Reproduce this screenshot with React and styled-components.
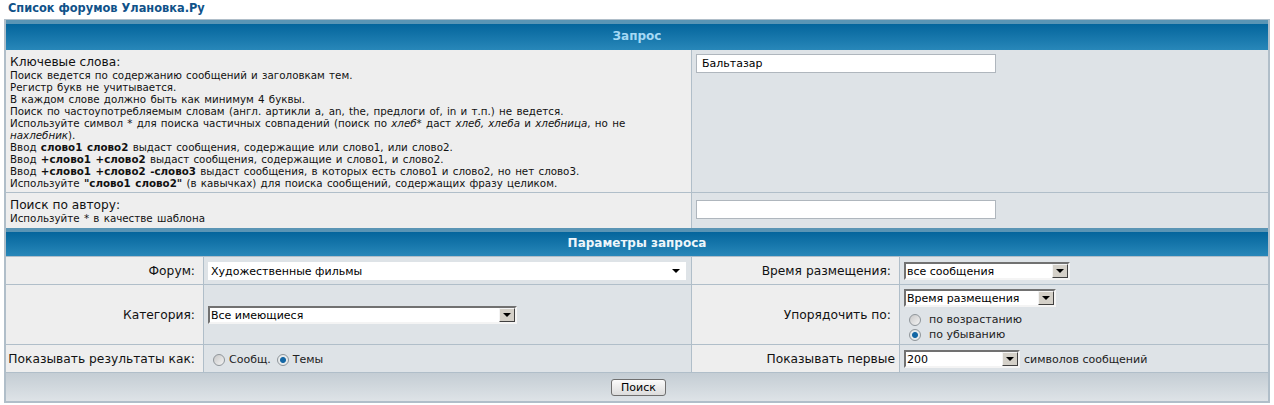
import React from "react";
import styled, { createGlobalStyle } from "styled-components";

const Global = createGlobalStyle`
  html, body { margin: 0; padding: 0; background: #fff; }
  body { font-family: Verdana, "DejaVu Sans", sans-serif; color: #000; }
`;
const Page = styled.div`
  width: 1274px;
  height: 405px;
  padding: 0 4px;
  box-sizing: border-box;
  overflow: hidden;
`;
const Title = styled.div`
  height: 19px;
  box-sizing: border-box;
  padding: 1px 0 0 4px;
  font-size: 11.4px;
  line-height: 15px;
  font-weight: bold;
  color: #105289;
`;
const Panel = styled.div`
  width: 1266px;
  height: 384px;
  box-sizing: border-box;
  border: 2px solid #b0bec9;
  border-top-width: 1px;
  background: #b0bec9;
  display: flex;
  flex-direction: column;
`;
const Head = styled.div`
  height: ${(p) => p.$h}px;
  flex: none;
  box-sizing: border-box;
  border-top: 4px solid #5a95b5;
  padding-bottom: ${(p) => p.$pb}px;
  background: linear-gradient(#04659c, #2887b9);
  color: ${(p) => p.$c};
  font-size: 12px;
  font-weight: bold;
  display: flex;
  align-items: center;
  justify-content: center;
`;
const Row = styled.div`
  display: grid;
  grid-template-columns: ${(p) => p.$cols};
  column-gap: 1px;
  height: ${(p) => p.$h}px;
  flex: none;
  margin-top: ${(p) => p.$mt ?? 1}px;
`;
const LabelCell = styled.div`
  background: #eeeeee;
  box-sizing: border-box;
  padding: ${(p) => (p.$right ? `1px ${p.$pr ?? 8}px 0 2px` : "6px 4px 0")};
  display: ${(p) => (p.$right ? "flex" : "block")};
  align-items: center;
  justify-content: flex-end;
  font-size: 12.25px;
  line-height: 12px;
  white-space: nowrap;
  color: #111;
`;
const Big = styled.div`
  font-size: 12.2px;
  line-height: 13px;
  color: #111;
`;
const Hint = styled.div`
  font-size: 10.3px;
  word-spacing: 1px;
  line-height: 12px;
  white-space: normal;
`;
const ValueCell = styled.div`
  background: #dee3e7;
  box-sizing: border-box;
  padding: ${(p) => p.$pad || "0 4px"};
  display: flex;
  flex-direction: ${(p) => (p.$col ? "column" : "row")};
  align-items: ${(p) => (p.$col ? "flex-start" : "center")};
  gap: ${(p) => p.$gap || 0}px;
`;
const TextInput = styled.input`
  width: 300px;
  height: 19px;
  box-sizing: border-box;
  border: 1px solid #afb6bd;
  background: #fff;
  padding: 0 5px;
  font: 11px Verdana, "DejaVu Sans", sans-serif;
  color: #000;
  outline: none;
`;
const Select = styled.div`
  width: ${(p) => p.$w}px;
  height: 18px;
  box-sizing: border-box;
  background: #fff;
  border: 2px solid;
  border-color: ${(p) => (p.$flat ? "#fff" : "#717171 #f4f4f4 #f4f4f4 #717171")};
  display: flex;
  align-items: center;
  justify-content: space-between;
  flex: none;
  font-size: 11px;
  padding-left: 1px;
`;
const SelectText = styled.span`
  padding-top: 1px;
`;
const SelectBtn = styled.div`
  width: 16px;
  height: 14px;
  box-sizing: border-box;
  background: ${(p) => (p.$flat ? "#fff" : "#d4d0c8")};
  border: 1px solid;
  border-color: ${(p) => (p.$flat ? "#fff" : "#f4f4f4 #404040 #404040 #f4f4f4")};
  display: flex;
  align-items: center;
  justify-content: center;
  &::after {
    content: "";
    border: 4px solid transparent;
    border-top-color: #000;
    border-bottom-width: 0;
  }
`;
const RadioDot = styled.span`
  width: 12px;
  height: 12px;
  flex: none;
  box-sizing: border-box;
  border-radius: 50%;
  border: 1px solid #8f959a;
  background: ${(p) =>
    p.$on
      ? "radial-gradient(circle at 50% 50%, #1467a5 0 2.5px, #e6eaec 3.5px)"
      : "linear-gradient(135deg, #c8c8c8, #f4f4f4)"};
`;
const RadioLine = styled.label`
  display: flex;
  align-items: center;
  gap: ${(p) => p.$gap || 4}px;
  margin-left: ${(p) => p.$ml || 0}px;
  margin-top: ${(p) => p.$mt || 0}px;
  font-size: 11px;
  line-height: 15px;
  color: #222;
`;
const Footer = styled.div`
  flex: 1;
  margin-top: 1px;
  background: linear-gradient(#c4cdd4, #dee3e7);
  display: flex;
  align-items: center;
  justify-content: center;
  padding-left: 3px;
`;
const Button = styled.button`
  width: 55px;
  height: 17px;
  box-sizing: border-box;
  padding: 0;
  border: 1px solid #6f6f6f;
  border-radius: 3px;
  background: linear-gradient(#fbfbfb, #dcdcdc);
  font: 11px Verdana, "DejaVu Sans", sans-serif;
  color: #000;
`;
const Trail = styled.span`
  font-size: 11px;
  margin-left: 4px;
  padding-top: 1px;
  color: #222;
`;

const Sel = ({ w, flat, children }) => (
  <Select $w={w} $flat={flat}>
    <SelectText>{children}</SelectText>
    <SelectBtn $flat={flat} />
  </Select>
);

const P_COLS = "197px 487px 207px 1fr";

export default function App() {
  return (
    <Page>
      <Global />
      <Title>Список форумов Улановка.Ру</Title>
      <Panel>
        <Head $h={30} $pb={3} $c="#a5d9f5">Запрос</Head>
        <Row $cols="685px 1fr" $h={142} $mt={0}>
          <LabelCell>
            <Big>Ключевые слова:</Big>
            <Hint>
              Поиск ведется по содержанию сообщений и заголовкам тем.<br />
              Регистр букв не учитывается.<br />
              В каждом слове должно быть как минимум 4 буквы.<br />
              Поиск по частоупотребляемым словам (англ. артикли a, an, the, предлоги of, in и т.п.) не ведется.<br />
              Используйте символ * для поиска частичных совпадений (поиск по <i>хлеб*</i> даст <i>хлеб, хлеба</i> и <i>хлебница</i>, но не <i>нахлебник</i>).<br />
              Ввод <b>слово1 слово2</b> выдаст сообщения, содержащие или слово1, или слово2.<br />
              Ввод <b>+слово1 +слово2</b> выдаст сообщения, содержащие и слово1, и слово2.<br />
              Ввод <b>+слово1 +слово2 -слово3</b> выдаст сообщения, в которых есть слово1 и слово2, но нет слово3.<br />
              Используйте <b>"слово1 слово2"</b> (в кавычках) для поиска сообщений, содержащих фразу целиком.
            </Hint>
          </LabelCell>
          <ValueCell $pad="4px 4px" $col>
            <TextInput defaultValue="Бальтазар" />
          </ValueCell>
        </Row>
        <Row $cols="685px 1fr" $h={35}>
          <LabelCell>
            <Big>Поиск по автору:</Big>
            <Hint>Используйте * в качестве шаблона</Hint>
          </LabelCell>
          <ValueCell $pad="7px 4px" $col>
            <TextInput />
          </ValueCell>
        </Row>
        <Head $h={28} $pb={2} $c="#eef6fb">Параметры запроса</Head>
        <Row $cols={P_COLS} $h={27}>
          <LabelCell $right>Форум:</LabelCell>
          <ValueCell>
            <Sel w={478} flat>Художественные фильмы</Sel>
          </ValueCell>
          <LabelCell $right>Время размещения:</LabelCell>
          <ValueCell><Sel w={166}>все сообщения</Sel></ValueCell>
        </Row>
        <Row $cols={P_COLS} $h={59}>
          <LabelCell $right>Категория:</LabelCell>
          <ValueCell>
            <Sel w={309}>Все имеющиеся</Sel>
          </ValueCell>
          <LabelCell $right>Упорядочить по:</LabelCell>
          <ValueCell $col $pad="4px 4px 0">
            <Sel w={152}>Время размещения</Sel>
            <RadioLine $ml={5} $gap={8} $mt={5}><RadioDot />по возрастанию</RadioLine>
            <RadioLine $ml={5} $gap={8}><RadioDot $on />по убыванию</RadioLine>
          </ValueCell>
        </Row>
        <Row $cols={P_COLS} $h={27}>
          <LabelCell $right>Показывать результаты как:</LabelCell>
          <ValueCell $pad="2px 9px 0" $gap={6}>
            <RadioLine><RadioDot />Сообщ.</RadioLine>
            <RadioLine><RadioDot $on />Темы</RadioLine>
          </ValueCell>
          <LabelCell $right $pr={4}>Показывать первые</LabelCell>
          <ValueCell>
            <Sel w={116}>200</Sel>
            <Trail>символов сообщений</Trail>
          </ValueCell>
        </Row>
        <Footer><Button>Поиск</Button></Footer>
      </Panel>
    </Page>
  );
}
